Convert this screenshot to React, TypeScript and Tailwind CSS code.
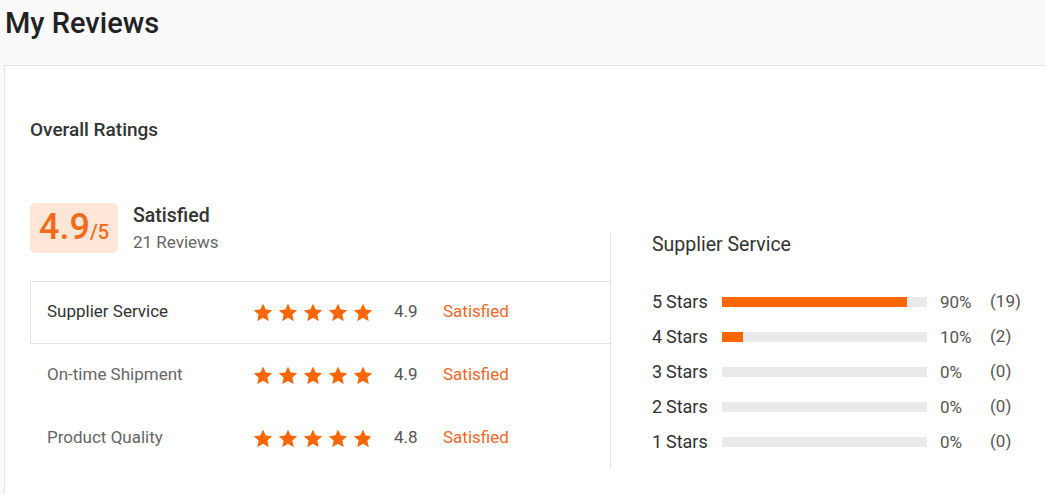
import React from "react";

const ORANGE = "#ff6600";

function Star({ fill = 1, id }: { fill?: number; id: string }) {
  const d =
    "M10 0.8 L12.7 6.6 L19.1 7.3 L14.3 11.6 L15.7 17.9 L10 14.7 L4.3 17.9 L5.7 11.6 L0.9 7.3 L7.3 6.6 Z";
  return (
    <svg width="20" height="19" viewBox="0 0 20 19">
      <defs>
        <clipPath id={id}>
          <rect x="0" y="0" width={20 * fill} height="19" />
        </clipPath>
      </defs>
      <path d={d} fill="#d9dce3" />
      <path d={d} fill={ORANGE} clipPath={`url(#${id})`} />
    </svg>
  );
}

function Stars({ last, id }: { last: number; id: string }) {
  return (
    <div className="flex gap-[5px]">
      {[1, 1, 1, 1, last].map((f, i) => (
        <Star key={i} fill={f} id={`${id}-${i}`} />
      ))}
    </div>
  );
}

const rows = [
  { label: "Supplier Service", value: "4.9", last: 1, active: true },
  { label: "On-time Shipment", value: "4.9", last: 1, active: false },
  { label: "Product Quality", value: "4.8", last: 0.85, active: false },
];

const dist = [
  { n: 5, pct: 90, count: 19 },
  { n: 4, pct: 10, count: 2 },
  { n: 3, pct: 0, count: 0 },
  { n: 2, pct: 0, count: 0 },
  { n: 1, pct: 0, count: 0 },
];

export default function App() {
  return (
    <div
      className="w-[1045px] h-[494px] overflow-hidden bg-[#f9f9f9] text-[#333]"
      style={{ fontFamily: "Roboto, 'Noto Sans', Arial, sans-serif" }}
    >
      <div className="h-[65px] pl-[5px] pt-[3px]">
        <h1 className="text-[29px] leading-[40px] font-medium text-[#222]">My Reviews</h1>
      </div>
      <div className="ml-[4px] w-[1080px] h-[500px] bg-white border border-[#e3e3e3]">
        <div className="pl-[25px] pt-[52px]">
          <div className="text-[19px] leading-[24px] font-medium text-[#333]">Overall Ratings</div>
          <div className="flex mt-[61px]">
            <div className="w-[580px]">
              <div className="flex items-start">
                <div className="w-[88px] h-[50px] rounded-[5px] bg-[#ffe6d6] flex items-baseline justify-center pt-[2px] text-[#f26a1b]">
                  <span className="text-[36px] leading-[44px] font-medium">4.9</span>
                  <span className="text-[20px] leading-[20px] font-medium">/5</span>
                </div>
                <div className="ml-[15px] pt-[1px]">
                  <div className="text-[19.5px] leading-[24px] font-medium text-[#333]">Satisfied</div>
                  <div className="text-[17px] leading-[22px] text-[#666] mt-[3px]">21 Reviews</div>
                </div>
              </div>
              <div className="mt-[28px]">
                {rows.map((r) => (
                  <div
                    key={r.label}
                    className={`flex items-center h-[63px] pl-[16px] pb-[1px] ${
                      r.active ? "border-y border-l border-[#e3e3e3]" : "border border-transparent"
                    }`}
                  >
                    <div className={`w-[206px] text-[17px] ${r.active ? "text-[#333]" : "text-[#666]"}`}>
                      {r.label}
                    </div>
                    <Stars last={r.last} id={r.label.replace(/\W/g, "")} />
                    <div className="ml-[21px] w-[49px] text-[17px] text-[#555]">{r.value}</div>
                    <div className="text-[17px] text-[#f0692a]">Satisfied</div>
                  </div>
                ))}
              </div>
            </div>
            <div className="mt-[29px] h-[237px] border-l border-[#e3e3e3] pl-[41px] pt-[1px]">
              <div className="text-[19.5px] leading-[24px] text-[#333]">Supplier Service</div>
              <div className="mt-[27px]">
                {dist.map((d) => (
                  <div key={d.n} className="flex items-center h-[35px] text-[18px] text-[#333]">
                    <div className="w-[70px] flex">
                      <span className="w-[14px]">{d.n}</span>
                      <span>Stars</span>
                    </div>
                    <div className="w-[205px] h-[10px] bg-[#e9eaec]">
                      <div className="h-full bg-[#ff6600]" style={{ width: `${d.pct}%` }} />
                    </div>
                    <div className="ml-[13px] w-[50px] text-[#555] pt-[3px] text-[17px]">{d.pct}%</div>
                    <div className="text-[#555] text-[17px]">({d.count})</div>
                  </div>
                ))}
              </div>
            </div>
          </div>
        </div>
      </div>
    </div>
  );
}
